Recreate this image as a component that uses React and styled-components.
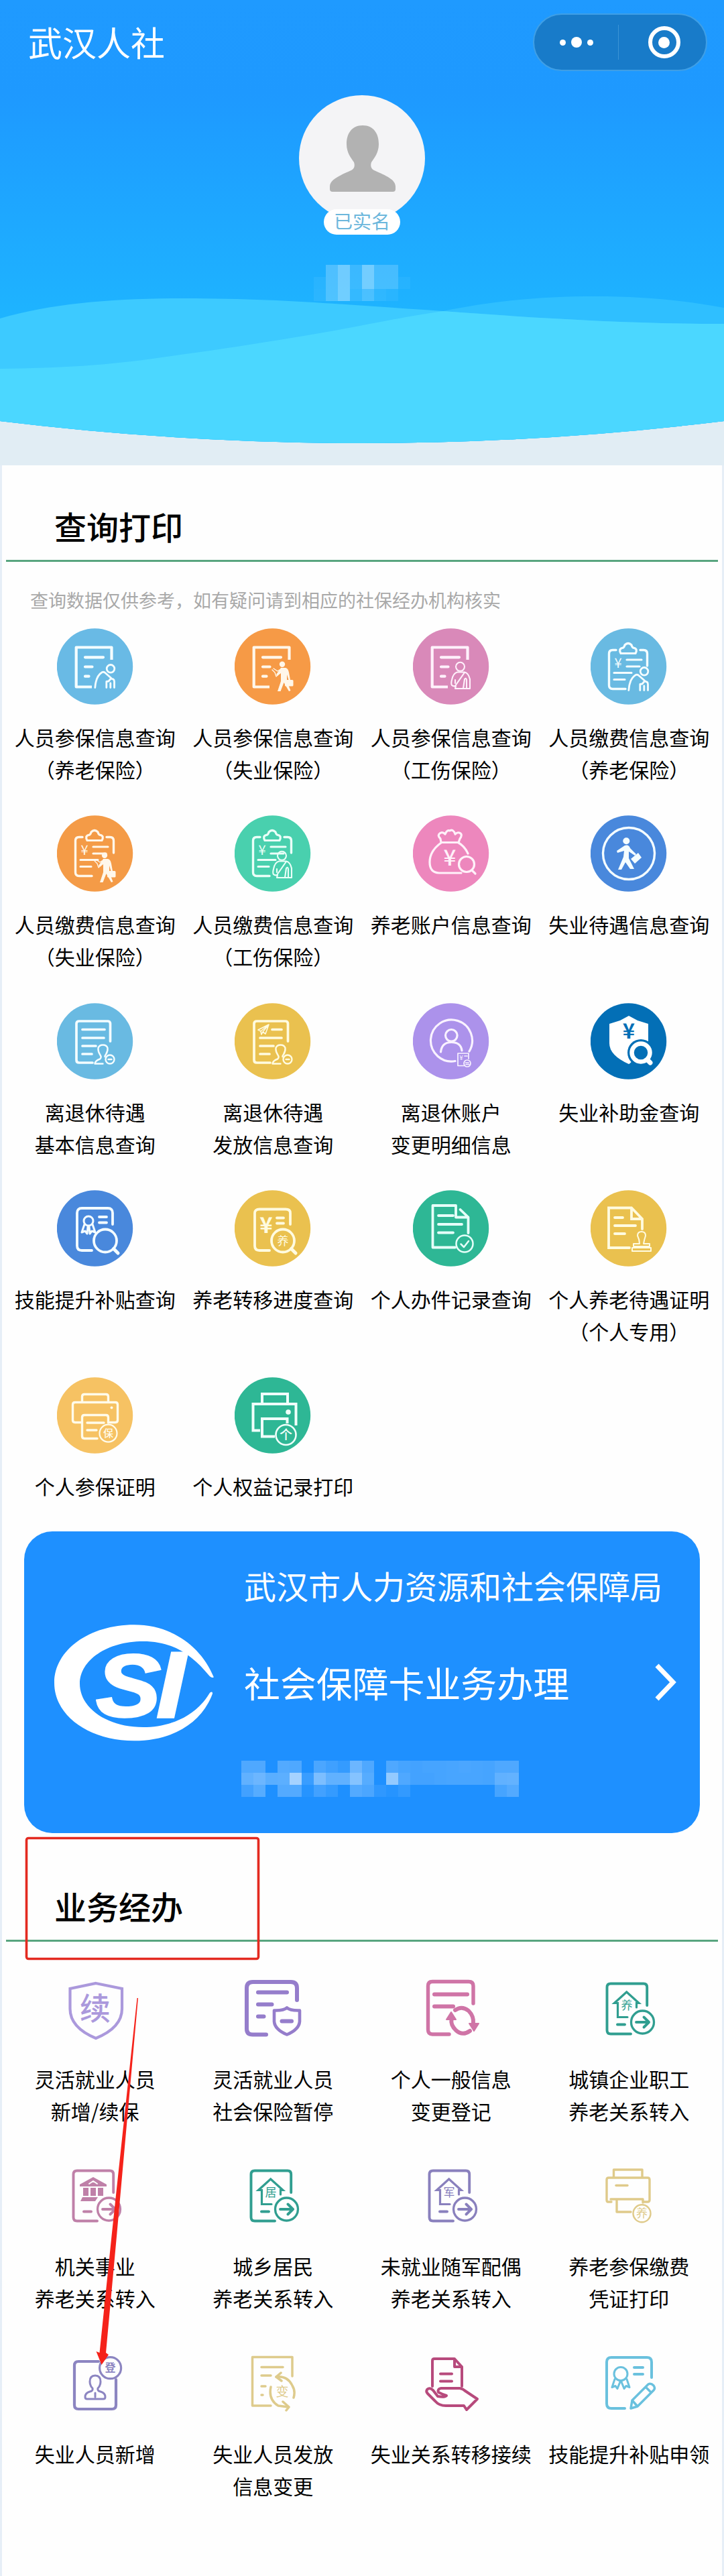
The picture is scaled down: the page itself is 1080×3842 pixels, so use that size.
import React from 'react';
import styled, { createGlobalStyle } from 'styled-components';

const GlobalStyle = createGlobalStyle`
	* {
		box-sizing: border-box;
	}

	body {
		margin: 0;
		background-color: #e6eef7;
		font-family: 'Noto Sans CJK SC', 'Noto Sans', sans-serif;
	}
`;

const Page = styled.div`
	position: relative;
	width: 1080px;
	height: 3842px;
	overflow: hidden;
	display: flex;
	flex-direction: column;
`;

const Header = styled.header`
	position: relative;
	height: 694px;
	background-color: #e1edf4;
	display: flex;
	flex-direction: column;
	align-items: center;
`;

const Backdrop = styled.svg`
	position: absolute;
	inset: 0;
`;

const TopBar = styled.div`
	position: relative;
	width: 100%;
	padding: 20px 25px 0 42px;
	display: flex;
	justify-content: space-between;
	align-items: center;
`;

const AppName = styled.h1`
	margin: 0 0 3px;
	color: white;
	font-size: 51px;
	font-weight: 400;
	line-height: 60px;
`;

const Capsule = styled.div`
	width: 260px;
	height: 86px;
	border: 2px solid #3f9fe6;
	border-radius: 43px;
	background-color: #187bc9;
	display: flex;
	align-items: center;
`;

const CapsuleHalf = styled.div`
	flex: 1;
	height: 52px;
	display: flex;
	justify-content: center;
	align-items: center;
	gap: 8px;

	& + & {
		padding-left: 5px;
		border-left: 1px solid #3b93d6;
	}
`;

const Dot = styled.span`
	width: ${(props) => props.$size}px;
	height: ${(props) => props.$size}px;
	border-radius: 50%;
	background-color: white;
`;

const Ring = styled.span`
	width: 48px;
	height: 48px;
	border: 6px solid white;
	border-radius: 50%;
	display: flex;
	justify-content: center;
	align-items: center;
`;

const Avatar = styled.div`
	position: relative;
	width: 188px;
	height: 188px;
	margin-top: 36px;
	border-radius: 50%;
	background-color: #f4f4f6;
`;

const Verified = styled.div`
	position: relative;
	width: 114px;
	height: 38px;
	margin-top: -18px;
	border-radius: 19px;
	background-color: white;
	color: #6cb7dc;
	font-size: 28px;
	line-height: 35px;
	text-align: center;
`;

const Mosaic = styled.div`
	position: relative;
	display: grid;
	grid-template-columns: repeat(${(props) => props.$columns}, 18px);
	grid-auto-rows: 18px;
	margin-top: ${(props) => props.$top}px;
`;

const MosaicCell = styled.span`
	background-color: rgba(255, 255, 255, ${(props) => props.$alpha});
`;

const Panel = styled.main`
	flex: 1;
	margin: 0 3px;
	padding: 0 6px;
	background-color: #fefefe;
`;

const SectionTitle = styled.h2`
	height: ${(props) => props.$height}px;
	margin: 0;
	padding: 0 0 21px 72px;
	border-bottom: 3px solid #58a57f;
	display: flex;
	align-items: flex-end;
	color: black;
	font-size: 48px;
	font-weight: 500;
	line-height: 60px;
`;

const Note = styled.p`
	height: 99px;
	margin: 0;
	padding: 36px 0 0 36px;
	color: #a9a9a9;
	font-size: 27px;
	line-height: 41px;
`;

const Grid = styled.div`
	display: grid;
	grid-template-columns: repeat(4, 1fr);
	grid-template-rows: repeat(${(props) => props.$rows - 1}, 279.25px) 187px;
	margin-top: ${(props) => props.$top || 0}px;
`;

const Item = styled.a`
	display: flex;
	flex-direction: column;
	align-items: center;
	color: black;

	svg {
		flex-shrink: 0;
	}
`;

const Label = styled.span`
	margin-top: 24px;
	font-size: 30px;
	line-height: 48px;
	text-align: center;
	white-space: pre;
`;

const Banner = styled.div`
	width: 1008px;
	height: 450px;
	margin: 43px 0 0 27px;
	padding: 0 34px 0 44px;
	border-radius: 42px;
	background-color: #1e90ff;
	display: flex;
	align-items: center;
`;

const BannerText = styled.div`
	flex: 1;
	align-self: stretch;
	margin-left: 44px;
	padding-top: 50px;
	color: white;
	white-space: nowrap;
`;

const Bureau = styled.div`
	width: 0;
	font-size: 48px;
	line-height: 60px;
`;

const Service = styled.div`
	margin-top: 80px;
	font-size: 53.9px;
	line-height: 70px;
`;

const BannerMosaic = styled.div`
	margin-left: -4px;
`;

const Markup = styled.svg`
	position: absolute;
	inset: 0;
	pointer-events: none;
`;

const Glyph = ({ x, y, size, children, weight = 400, fill = 'currentColor' }) => (
	<text
		x={x}
		y={y + size * 0.38}
		fontSize={size}
		fontWeight={weight}
		textAnchor="middle"
		fill={fill}
		stroke="none"
	>
		{children}
	</text>
);

const Icon = ({ bg, color = '#f4fdff', width = 4.2, children }) => (
	<svg
		width="114"
		height="114"
		viewBox="0 0 114 114"
		fill="none"
		color={color}
		stroke="currentColor"
		strokeWidth={width}
		strokeLinecap="round"
		strokeLinejoin="round"
	>
		{bg && <circle cx="56.5" cy="57" r="56.7" fill={bg} stroke="none" />}
		{children}
	</svg>
);

/* shared icon parts */

const Sheet = () => (
	<>
		<path d="M81.5 47V28.5H28.7V87.5H52" strokeLinecap="butt" />
		<path d="M42 43.3H69M42 57.5H52.5M42 71.7H47.5" />
	</>
);

const Clipboard = () => (
	<>
		<path
			d="M38 32.5H33Q27.5 32.5 27.5 38V85Q27.5 90.5 33 90.5H52M74 32.5H79Q84.5 32.5 84.5 38V56"
			strokeWidth="3.4"
		/>
		<path
			d="M45 37.5Q41.5 31 47 29.5Q50 29.5 51 25Q56 20 61 25Q62 29.5 65 29.5Q70.5 31 67 37.5Z"
			strokeWidth="3.2"
		/>
		<Glyph x={41} y={51} size={20}>¥</Glyph>
		<path d="M54 47H76M54 57H73M35 66.5H61M35 76.5H51" strokeWidth="3.2" />
	</>
);

const Elder = ({ dy = 0 }) => (
	<g transform={`translate(0 ${dy})`} strokeWidth="2.8">
		<circle cx="80" cy="60.3" r="5.8" />
		<path d="M56.8 88.5Q58 71 67.5 65.5Q70 64.5 72.5 67L81 74.5M73.8 88.5V79.5L77 79L80 75.5Q85.5 75 85.5 79.5V88.5M79.8 88.5V82" />
	</g>
);

const Jobseeker = ({ dy = 0 }) => (
	<g transform={`translate(0 ${dy})`} fill="currentColor" stroke="none">
		<circle cx="71" cy="53.7" r="4.2" />
		<path d="M69 59H76Q80 60 81 66L83 77H80.5L78 69V79L83.5 93L81 94L73.5 81L68.5 94H64L69 79V67L64 71L62 69Z" />
		<rect x="75" y="77" width="12.5" height="9.5" rx="1.5" />
		<path
			d="M56 62L60 66L62 72L64 70M58 60L64 64L67 62"
			fill="none"
			stroke="currentColor"
			strokeWidth="1.3"
		/>
	</g>
);

const Injured = ({ dy = 0 }) => (
	<g transform={`translate(0 ${dy})`} strokeWidth="2.1">
		<circle cx="70.5" cy="57.3" r="6.5" />
		<path d="M66 65.5Q60 67 58 77Q56.5 83 58 85Q60 87 64 86L63 90H85V76Q83 67 77 65.5ZM77 66L63 86M63 77L63 82M75 90L77 76Q79 73 80 77V90" />
	</g>
);

const Retiree = () => (
	<g strokeWidth="2.4">
		<path d="M68.5 90.5H56.5Q57 86 64 83.5Q67 81 64.5 77.5Q61 72 61.5 67Q63 62.5 68.5 62.5Q74 62.5 75.5 67Q76 72 73 76.5Q71.5 78 71.5 80" />
		<circle cx="79" cy="84" r="6.5" />
		<path d="M76.5 84H81.5" />
	</g>
);

const Ribbon = ({ x, y, r }) => (
	<g strokeWidth="3">
		<circle cx={x} cy={y} r={r} />
		<path
			d={`M${x - r + 1} ${y + r - 2}L${x - r - 3} ${y + r + 10}L${x - r + 2} ${y + r + 8}L${x - r + 5} ${y + r + 12}L${x - 1} ${y + r + 2}M${x + r - 1} ${y + r - 2}L${x + r + 3} ${y + r + 10}L${x + r - 2} ${y + r + 8}L${x + r - 5} ${y + r + 12}L${x + 1} ${y + r + 2}`}
		/>
	</g>
);

const Magnifier = () => (
	<>
		<circle cx="72" cy="75.5" r="17" />
		<path d="M84.5 87.5L91 94" strokeWidth="5" />
	</>
);

const Transfer = () => (
	<>
		<path d="M84.2 53V26Q84.2 20.5 79 20.5H30Q24.5 20.5 24.5 26V90Q24.5 95.5 30 95.5H60" />
		<path d="M40 81.5H51" />
		<circle cx="77.5" cy="78" r="17" strokeWidth="3.3" />
		<path d="M68 78H86M79.5 70.5L87 78L79.5 85.5" />
	</>
);

const HouseTransfer = ({ color, children }) => (
	<Icon color={color} width={3.9}>
		<Transfer />
		<path
			d="M55 70.5H40.5V49.5H35.5L53.7 33L72 49.5H68.5V56"
			strokeWidth="3.2"
			strokeLinejoin="miter"
		/>
		<Glyph x={54} y={53} size={17}>{children}</Glyph>
	</Icon>
);

const queryItems = [
	{
		label: '人员参保信息查询\n（养老保险）',
		icon: <Icon bg="#69bae5"><Sheet /><Elder /></Icon>,
	},
	{
		label: '人员参保信息查询\n（失业保险）',
		icon: <Icon bg="#f69a46" color="#fff7ea"><Sheet /><Jobseeker /></Icon>,
	},
	{
		label: '人员参保信息查询\n（工伤保险）',
		icon: <Icon bg="#d989b9" color="#fff1fb"><Sheet /><Injured /></Icon>,
	},
	{
		label: '人员缴费信息查询\n（养老保险）',
		icon: <Icon bg="#69bae2"><Clipboard /><Elder dy={4} /></Icon>,
	},
	{
		label: '人员缴费信息查询\n（失业保险）',
		icon: <Icon bg="#f49b47" color="#fff7ea"><Clipboard /><Jobseeker dy={6} /></Icon>,
	},
	{
		label: '人员缴费信息查询\n（工伤保险）',
		icon: <Icon bg="#49d0ae" color="#eafff8"><Clipboard /><Injured dy={3} /></Icon>,
	},
	{
		label: '养老账户信息查询',
		icon: (
			<Icon bg="#ed87bd" color="#fff1f9" width={3.2}>
				<path d="M42 40.5H68L70 35Q75 28 69 26Q66 25 63 28Q60 20 55 23Q51 21 48 28Q44 24 40 27Q36 30 41 35ZM42 41Q25 53 25 70Q25 85.5 39 86H72M68 41Q77 46 82 57" />
				<Glyph x={55} y={62} size={33} weight={500}>¥</Glyph>
				<circle cx="80" cy="73" r="11.5" />
				<path d="M88 82L93 87" />
			</Icon>
		),
	},
	{
		label: '失业待遇信息查询',
		icon: (
			<Icon bg="#4988dc" width={3.4}>
				<circle cx="57" cy="57" r="38.5" />
				<g fill="currentColor" stroke="none">
					<circle cx="53.3" cy="38.3" r="5" />
					<path d="M51 45Q57 43 59 49L68 58L66 60L57 54L57 64L65 80H59L52 70L46 81H41L49 62L50 53L40 56L39 53Z" />
					<path d="M60 65L71 56L76 63L66 72Z" />
				</g>
			</Icon>
		),
	},
	{
		label: '离退休待遇\n基本信息查询',
		icon: (
			<Icon bg="#69bae2" width={3.7}>
				<path d="M79.5 57V31Q79.5 27 75.5 27H33Q29 27 29 31V85Q29 89 33 89H53" />
				<path d="M38 39.5H71M38 52H70M38 64H58M38 76H52" />
				<Retiree />
			</Icon>
		),
	},
	{
		label: '离退休待遇\n发放信息查询',
		icon: (
			<Icon bg="#eac14f" color="#fffbe0" width={3.7}>
				<path d="M79.5 57V31Q79.5 27 75.5 27H33Q29 27 29 31V85Q29 89 33 89H53" />
				<path d="M56 39.5H70M38 52H70M38 64H58M38 76H52" />
				<path d="M35 40L51 32L46 46L42 43L40 47L39 42ZM39 42L51 32L42 43" strokeWidth="1.6" />
				<Retiree />
			</Icon>
		),
	},
	{
		label: '离退休账户\n变更明细信息',
		icon: (
			<Icon bg="#ac92eb" color="#f9f2ff" width={3.2}>
				<path d="M63 86.5A31 31 0 1 1 84 72" />
				<circle cx="57.3" cy="48.3" r="8.8" />
				<path d="M41.5 73Q43 58.5 57.3 58.5Q71.5 58.5 73 71" />
				<g strokeWidth="1.7">
					<path d="M76 93.5H67V75H83V83M77 79H81" />
					<circle cx="81" cy="90" r="5" />
					<path d="M78.5 89H83M79 91.5H84" />
				</g>
				<Glyph x={72} y={81} size={10}>¥</Glyph>
			</Icon>
		),
	},
	{
		label: '失业补助金查询',
		icon: (
			<Icon bg="#036fb6" color="#ffffff">
				<path
					d="M57 19L70 26L86 31V60Q86 78 57 91Q28 78 28 60V31L44 26Z"
					fill="currentColor"
					stroke="none"
				/>
				<circle cx="75" cy="74" r="20" fill="#036fb6" stroke="none" />
				<path d="M57 92L66 82L84 92Z" fill="#036fb6" stroke="none" />
				<Glyph x={57} y={41} size={31} weight={700} fill="#036fb6">¥</Glyph>
				<circle cx="75" cy="74" r="13.5" strokeWidth="6.5" />
				<path d="M84.5 84.5L89 89" strokeWidth="7" />
			</Icon>
		),
	},
	{
		label: '技能提升补贴查询',
		icon: (
			<Icon bg="#4988dc" width={3.8}>
				<path d="M83 51V34Q83 27 76 27H37Q30 27 30 34V83Q30 90 37 90H52" />
				<Ribbon x={47} y={46} r={7} />
				<path d="M63 40H74M63 48.5H74" />
				<Magnifier />
			</Icon>
		),
	},
	{
		label: '养老转移进度查询',
		icon: (
			<Icon bg="#eac14f" color="#fffbe0" width={3.8}>
				<path d="M83 51V34Q83 28.5 76 28.5H37Q30 28.5 30 34V83Q30 90 37 90H52" />
				<Glyph x={47} y={51} size={33} weight={700}>¥</Glyph>
				<path d="M63 41.5H73M63 49.5H73" />
				<Magnifier />
				<Glyph x={72} y={76} size={17}>养</Glyph>
			</Icon>
		),
	},
	{
		label: '个人办件记录查询',
		icon: (
			<Icon bg="#2eb795" color="#e6fff9" width={3.8}>
				<path d="M63 85.5H29.5V23H64V40.5H82.5V64M70.5 29L82.5 40.5" />
				<path d="M38 38H60M38 51H73M38 63.5H60" />
				<circle cx="77" cy="80" r="12.5" strokeWidth="2.5" />
				<path d="M71.5 80.5L76 85L83 76" strokeWidth="2.5" />
			</Icon>
		),
	},
	{
		label: '个人养老待遇证明\n（个人专用）',
		icon: (
			<Icon bg="#eac14f" color="#fffbe0" width={3.8}>
				<path d="M58 86H27V26.5H61L77 43V58M61 27V43H76" strokeLinejoin="miter" />
				<path d="M36 41H48M36 53H67M36 65H51" />
				<path
					d="M76 62Q82 62 82 68Q80 74 79 80H88V84H64V80H73Q73 74 70 68Q70 62 76 62ZM62 86V91H90V86Z"
					strokeWidth="2"
				/>
			</Icon>
		),
	},
	{
		label: '个人参保证明',
		icon: (
			<Icon bg="#f6c263" color="#fffbea" width={3.4}>
				<path d="M37.5 37V29Q37.5 25.5 41 25.5H73Q76.5 25.5 76.5 29V37" />
				<path d="M36 67.5H27Q23.5 67.5 23.5 64V41Q23.5 37.5 27 37.5H87Q90.5 37.5 90.5 41V64Q90.5 67.5 87 67.5H79" />
				<path d="M60 91.5H41Q37.5 91.5 37.5 88V60Q37.5 56.5 41 56.5H73Q76.5 56.5 76.5 60V68M45 68H70M45 79H59" />
				<circle cx="81.5" cy="45.5" r="2" fill="currentColor" stroke="none" />
				<circle cx="76.5" cy="83.7" r="13" strokeWidth="2.2" />
				<Glyph x={76.5} y={83.7} size={15} weight={500}>保</Glyph>
			</Icon>
		),
	},
	{
		label: '个人权益记录打印',
		icon: (
			<Icon bg="#2eb795" color="#f0fffb" width={4}>
				<g strokeLinejoin="miter" strokeLinecap="butt">
					<path d="M41 40V25H79V40M38 79.5H27.5V40H91.5V72" />
					<path d="M60 88.5H41V62H78.5V69" />
				</g>
				<circle cx="80" cy="52" r="3.8" fill="currentColor" stroke="none" />
				<circle cx="76.5" cy="86" r="15" strokeWidth="2.6" />
				<Glyph x={76.5} y={86} size={19} weight={500}>个</Glyph>
			</Icon>
		),
	},
];

const businessItems = [
	{
		label: '灵活就业人员\n新增/续保',
		icon: (
			<Icon color="#ab99dc">
				<path d="M58 20L97 28V58Q97 86 58 102Q19.5 86 19.5 58V28Z" strokeLinejoin="miter" />
				<Glyph x={57} y={57} size={46} weight={500}>续</Glyph>
			</Icon>
		),
	},
	{
		label: '灵活就业人员\n社会保险暂停',
		icon: (
			<Icon color="#957dcb" width={6}>
				<path d="M93 45V27Q93 18 84 18H27Q18 18 18 27V88Q18 96.5 27 96.5H47" />
				<path d="M35 33.5H78M35 51.5H55.5M35 69.5H43.5M70.5 76.5H85" />
				<path d="M78 56.5Q83 61 97 60.5V77Q96 89 78 96.5Q60 89 59 77V60.5Q73 61 78 56.5Z" strokeWidth="4.6" />
			</Icon>
		),
	},
	{
		label: '个人一般信息\n变更登记',
		icon: (
			<Icon color="#cf74a6" width={5.4}>
				<path d="M90 50V24Q90 17.5 83 17.5H29Q22.5 17.5 22.5 24V89Q22.5 96 29 96H54" />
				<path d="M32 36.5H81M32 54.5H60" strokeWidth="6" />
				<path d="M63 60Q73 53 83 61Q91 69 90 80M85 91Q74 99 64 90Q56 82 57.5 74" strokeWidth="6" />
				<path d="M84 80H98L91 91ZM50 74H64L57 63Z" fill="currentColor" strokeWidth="2" />
			</Icon>
		),
	},
	{
		label: '城镇企业职工\n养老关系转入',
		icon: <HouseTransfer color="#309e90">养</HouseTransfer>,
	},
	{
		label: '机关事业\n养老关系转入',
		icon: (
			<Icon color="#bf80a8" width={3.9}>
				<Transfer />
				<path
					d="M54 30L74 41V44H34V41ZM39 46H47V58H39ZM50 46H58V58H50ZM61 46H69V58H61ZM38 60H61L57 66H35Z"
					fill="currentColor"
					stroke="none"
				/>
				<path d="M48 40L54 36L60 40" stroke="#fefefe" strokeWidth="2" />
			</Icon>
		),
	},
	{
		label: '城乡居民\n养老关系转入',
		icon: <HouseTransfer color="#309e90">居</HouseTransfer>,
	},
	{
		label: '未就业随军配偶\n养老关系转入',
		icon: <HouseTransfer color="#8980bd">军</HouseTransfer>,
	},
	{
		label: '养老参保缴费\n凭证打印',
		icon: (
			<Icon color="#dfca8a" width={3.4}>
				<path d="M34.5 31V19H77V31M31 67H26Q24 67 24 64V34Q24 31 27 31H85Q88 31 88 34V64Q88 67 85 67H79M30 63H78V68M39 64V82H60" />
				<path d="M38 42.5H55" />
				<circle cx="76.5" cy="84.3" r="13" strokeWidth="2.4" />
				<Glyph x={76.5} y={84} size={17}>养</Glyph>
			</Icon>
		),
	},
	{
		label: '失业人员新增',
		icon: (
			<Icon color="#8c85c1">
				<path d="M62 25H32Q26 25 26 31V90Q26 96 32 96H82Q88 96 88 90V52" />
				<circle cx="79.6" cy="34.7" r="16" strokeWidth="3.2" />
				<Glyph x={79.6} y={34.2} size={16} weight={700}>登</Glyph>
				<path
					d="M57 46Q65 46 65 55Q65 61 61 65Q60 69 65 70Q72 72 72 78Q72 81 69 81H45Q42 81 42 78Q42 72 49 70Q54 69 53 65Q49 61 49 55Q49 46 57 46ZM57 72V78"
					strokeWidth="3"
				/>
			</Icon>
		),
	},
	{
		label: '失业人员发放\n信息变更',
		icon: (
			<Icon color="#decb8c" width={3.5}>
				<path d="M86 47V18.5H26.5V91H54" />
				<path d="M40 33.5H72M40 46H54M40 62H46M40 75H42" />
				<path d="M62 48Q79 46 86 61Q91 69 88 79M54 63Q50 82 65 91L80 93" />
				<path d="M69 42L62 48L70 54M72 85L81 93L77 98" />
				<Glyph x={71} y={70} size={19}>变</Glyph>
			</Icon>
		),
	},
	{
		label: '失业关系转移接续',
		icon: (
			<Icon color="#b74a7c" width={4}>
				<path d="M29 62V24Q29 21 32 21H62L73 33V62M62 21V33H73" />
				<path d="M41 43.5H58M41 54.5H58" />
				<path d="M21 67Q25 63 30 68L37 77Q47 79 50 76Q44 74 38 71Q36 66 42 65H70Q75 66 78 69L96 81L80 97L76 91H49Q39 91 33 84L22 73Q19 70 21 67Z" />
			</Icon>
		),
	},
	{
		label: '技能提升补贴申领',
		icon: (
			<Icon color="#6ac1de" width={4}>
				<path d="M91 49V26Q91 19 84 19H31Q24 19 24 26V88Q24 95 31 95H51" />
				<Ribbon x={45} y={43.5} r={10} />
				<path d="M65 34H78M65 44H78" />
				<path d="M60 95L62 83L86 59Q90 57 94 61Q97 65 94 68L70 92ZM62 83L70 92M82 63L90 71" strokeWidth="3.5" />
			</Icon>
		),
	},
];

const nameCells = [
	[0, 0.22, 0.37, 0.13, 0.38, 0.18, 0.18, 0],
	[0.05, 0.22, 0.37, 0.13, 0.38, 0.18, 0.18, 0.04],
	[0.06, 0.22, 0.37, 0.1, 0.2, 0.08, 0.05, 0],
];

const cardCells = [
	[
		0.22, 0.22, 0, 0.24, 0.22, 0, 0.2, 0.15, 0.1, 0.35, 0.22, 0, 0.22, 0.18,
		0.17, 0.18, 0.18, 0.19, 0.2, 0.19, 0.18, 0.22, 0.22,
	],
	[
		0.3, 0.35, 0.27, 0.28, 0.6, 0.12, 0.42, 0.3, 0.3, 0.46, 0.25, 0, 0.52,
		0.22, 0.17, 0.17, 0.18, 0.19, 0.19, 0.19, 0.18, 0.3, 0.31,
	],
	[
		0.16, 0.25, 0, 0.24, 0.24, 0.04, 0.16, 0.1, 0, 0.24, 0.2, 0.08, 0.04, 0.09,
		0, 0, 0, 0, 0, 0, 0, 0.18, 0.24,
	],
];

const Redacted = ({ rows, top }) => (
	<Mosaic $columns={rows[0].length} $top={top}>
		{rows.flat().map((alpha, i) => (
			<MosaicCell key={i} $alpha={alpha} />
		))}
	</Mosaic>
);

const waveLeft =
	'M0 475C80 452 170 445 275 445C420 445 520 455 661 464C820 476 950 483 1080 483V694H0Z';
const waveRight =
	'M0 550C90 549 160 545 241 533C330 521 400 510 482 496C560 482 600 473 661 464C740 448 810 442 888 442C960 442 1020 448 1080 459V694H0Z';

const HeaderBackdrop = () => (
	<Backdrop width="1080" height="694" viewBox="0 0 1080 694">
		<defs>
			<linearGradient id="sky" x1="0" y1="0" x2="0" y2="1">
				<stop offset="0" stopColor="#1f9aff" />
				<stop offset="0.2" stopColor="#1e99ff" />
				<stop offset="0.7" stopColor="#1eb5ff" />
			</linearGradient>
			<clipPath id="bowl">
				<path d="M0 0H1080V628Q540 694 0 628Z" />
			</clipPath>
			<clipPath id="wave">
				<path d={waveLeft} />
			</clipPath>
		</defs>
		<g clipPath="url(#bowl)">
			<rect width="1080" height="694" fill="url(#sky)" />
			<path d={waveRight} fill="#2fbfff" />
			<path d={waveLeft} fill="#3dcaff" />
			<path d={waveRight} fill="#4bd7ff" clipPath="url(#wave)" />
		</g>
	</Backdrop>
);

const Logo = () => (
	<svg width="240" height="176.7" viewBox="30 60 720 530" fill="white">
		<path d="M745 298C690 165 560 67 390 67C190 67 33 180 33 327C33 475 190 586 390 586C570 586 695 500 741 375C742 364 732 366 727 374C670 470 560 525 430 525C270 525 147 440 147 330C147 225 270 141 430 141C570 141 650 205 725 293C735 306 750 305 745 298Z" />
		<g
			fontFamily="'Liberation Sans', sans-serif"
			fontWeight="700"
			fontStyle="italic"
			stroke="white"
			strokeWidth="10"
		>
			<text x="220" y="478" fontSize="395" textLength="290" lengthAdjust="spacingAndGlyphs">
				S
			</text>
			<text x="490" y="480" fontSize="415" textLength="130" lengthAdjust="spacingAndGlyphs">
				I
			</text>
		</g>
	</svg>
);

const Services = ({ items, top }) => (
	<Grid $rows={Math.ceil(items.length / 4)} $top={top}>
		{items.map((item) => (
			<Item key={item.label}>
				{item.icon}
				<Label>{item.label}</Label>
			</Item>
		))}
	</Grid>
);

const App = () => {
	return (
		<Page>
			<GlobalStyle />
			<Header>
				<HeaderBackdrop />
				<TopBar>
					<AppName>武汉人社</AppName>
					<Capsule>
						<CapsuleHalf>
							<Dot $size={9} />
							<Dot $size={16} />
							<Dot $size={9} />
						</CapsuleHalf>
						<CapsuleHalf>
							<Ring>
								<Dot $size={17} />
							</Ring>
						</CapsuleHalf>
					</Capsule>
				</TopBar>
				<Avatar>
					<svg width="188" height="188" viewBox="0 0 188 188" fill="#b2b2b2">
						<path d="M95 45C112 45 119 58 119 73C119 86 112 94 108 100C106 106 108 110 112 112C130 120 144 126 144 136V140Q144 144 140 144H50Q46 144 46 140V136C46 126 60 120 78 112C82 110 84 106 82 100C78 94 71 86 71 73C71 58 78 45 95 45Z" />
					</svg>
				</Avatar>
				<Verified>已实名</Verified>
				<Redacted rows={nameCells} top={45} />
			</Header>
			<Panel>
				<SectionTitle $height={144}>查询打印</SectionTitle>
				<Note>查询数据仅供参考，如有疑问请到相应的社保经办机构核实</Note>
				<Services items={queryItems} />
				<Banner>
					<Logo />
					<BannerText>
						<Bureau>武汉市人力资源和社会保障局</Bureau>
						<Service>社会保障卡业务办理</Service>
						<BannerMosaic>
							<Redacted rows={cardCells} top={82} />
						</BannerMosaic>
					</BannerText>
					<svg width="34" height="58" viewBox="0 0 34 58" fill="none" stroke="white" strokeWidth="7">
						<path d="M4 4L28 29L4 54" />
					</svg>
				</Banner>
				<SectionTitle $height={162}>业务经办</SectionTitle>
				<Services items={businessItems} top={42} />
			</Panel>
			<Markup width="1080" height="3842" viewBox="0 0 1080 3842">
				<rect
					x="39.5"
					y="2741.5"
					width="346"
					height="180"
					rx="3"
					fill="none"
					stroke="#e32a20"
					strokeWidth="3.6"
				/>
				<path d="M204.5 2980H206L174.5 3330L158 3509L162 3512L151.5 3527L143.5 3507L148.5 3509L167 3330Z" fill="#f5221a" />
			</Markup>
		</Page>
	);
};

export default App;
